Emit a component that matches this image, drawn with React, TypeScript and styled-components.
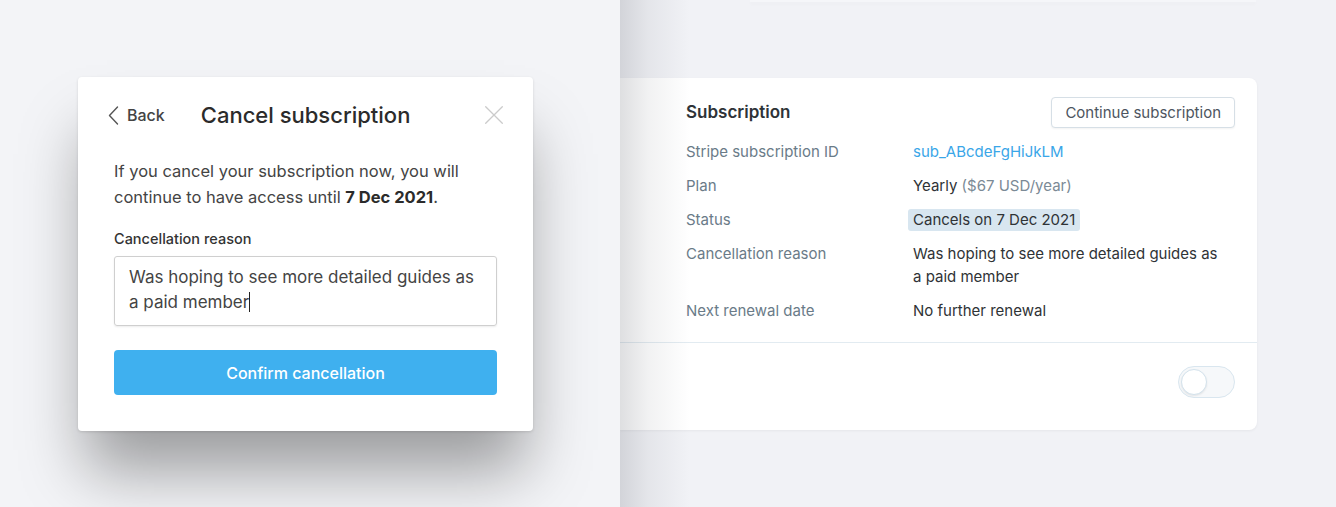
import React from 'react';
import styled, { createGlobalStyle } from 'styled-components';

const GlobalStyle = createGlobalStyle`
  html, body {
    margin: 0;
    padding: 0;
    width: 1336px;
    height: 507px;
    overflow: hidden;
    font-family: Inter, "Liberation Sans", Arial, sans-serif;
    -webkit-font-smoothing: antialiased;
  }
`;

const Page = styled.div`
  display: grid;
  grid-template-columns: 620px 716px;
  height: 507px;
`;

const LeftPane = styled.div`
  background: #f3f4f7;
  padding: 77px 0 0 78px;
  overflow: hidden;
`;

const Modal = styled.div`
  width: 455px;
  box-sizing: border-box;
  background: #fff;
  border-radius: 4px;
  padding: 24px 36px 36px 36px;
  box-shadow: 0 48px 60px -8px rgba(0, 0, 0, 0.36), 0 1px 3px rgba(0, 0, 0, 0.12);
`;

const ModalHeader = styled.div`
  display: flex;
  align-items: center;
  height: 28px;
  margin: 0 -6px;
`;

const BackLink = styled.button`
  display: flex;
  align-items: center;
  gap: 8px;
  border: 0;
  background: none;
  padding: 0;
  font: inherit;
  font-size: 16px;
  font-weight: 500;
  color: #444;
  cursor: pointer;
`;

const Title = styled.h2`
  margin: 0 0 0 36px;
  font-size: 22px;
  font-weight: 500;
  color: #2b2b2b;
  flex: 1;
`;

const CloseBtn = styled.button`
  border: 0;
  background: none;
  padding: 0;
  display: flex;
  cursor: pointer;
`;

const Paragraph = styled.p`
  margin: 29px 0 0;
  font-size: 16.5px;
  line-height: 26px;
  color: #444;
  b {
    font-weight: 700;
    color: #2b2b2b;
  }
`;

const FieldLabel = styled.label`
  display: block;
  margin-top: 19px;
  font-size: 14.5px;
  line-height: 20px;
  font-weight: 500;
  color: #333;
`;

const ReasonBox = styled.div`
  margin-top: 7px;
  height: 70px;
  box-sizing: border-box;
  border: 1px solid #cfcfcf;
  border-radius: 3px;
  box-shadow: 0 1px 2px rgba(0, 0, 0, 0.08);
  padding: 8px 14px;
  font-size: 17px;
  line-height: 25px;
  color: #444;
`;

const Caret = styled.span`
  display: inline-block;
  width: 1px;
  height: 20px;
  background: #222;
  vertical-align: -4px;
`;

const PrimaryButton = styled.button`
  margin-top: 24px;
  width: 100%;
  height: 45px;
  border: 0;
  border-radius: 4px;
  background: #3fb0ef;
  color: #fff;
  font: inherit;
  font-size: 16px;
  font-weight: 500;
  cursor: pointer;
`;

const RightPane = styled.div`
  position: relative;
  background: #f1f2f6;
  overflow: hidden;
  &::before {
    content: '';
    position: absolute;
    inset: 0;
    background: linear-gradient(to right, rgba(60, 64, 75, 0.17), rgba(60, 64, 75, 0.07) 28px, rgba(60, 64, 75, 0) 70px);
    pointer-events: none;
    z-index: 2;
  }
`;

const PrevCardEdge = styled.div`
  height: 2px;
  margin: 0 80px 0 130px;
  background: #f5f6f9;
  box-shadow: 0 2px 4px rgba(0, 0, 0, 0.03);
`;

const Card = styled.div`
  margin-top: 76px;
  width: 637px;
  background: #fff;
  border-radius: 0 8px 8px 0;
  box-shadow: 0 1px 3px rgba(0, 0, 0, 0.05);
`;

const CardBody = styled.div`
  padding: 19px 22px 20px 66px;
`;

const CardHeader = styled.div`
  display: flex;
  align-items: center;
  justify-content: space-between;
  height: 30px;
  margin-bottom: 13px;
`;

const CardTitle = styled.h3`
  margin: 0;
  font-size: 17px;
  font-weight: 600;
  color: #2e3338;
`;

const OutlineButton = styled.button`
  height: 31px;
  padding: 0 13px;
  border: 1px solid #d6dfe6;
  border-radius: 4px;
  background: #fff;
  box-shadow: 0 1px 2px rgba(0, 0, 0, 0.05);
  font: inherit;
  font-size: 15px;
  color: #4d5560;
  cursor: pointer;
`;

const Details = styled.dl`
  display: grid;
  grid-template-columns: 227px 1fr;
  row-gap: 11px;
  margin: 0;
  font-size: 15px;
  line-height: 23px;
`;

const Term = styled.dt`
  color: #6a7b88;
`;

const Value = styled.dd<{ $link?: boolean }>`
  margin: 0;
  color: ${p => (p.$link ? '#3aa6e8' : '#2f3336')};
  max-width: 310px;
`;

const Muted = styled.span`
  color: #7b8a96;
`;

const Badge = styled.span`
  display: inline-block;
  margin-left: -5px;
  padding: 0 5px;
  line-height: 22px;
  border-radius: 3px;
  background: #d8e6f0;
  color: #2f3336;
`;

const CardFooter = styled.div`
  border-top: 1px solid #e2ebf1;
  height: 88px;
  box-sizing: border-box;
  display: flex;
  align-items: flex-start;
  justify-content: flex-end;
  padding: 23px 22px 0 0;
`;

const Toggle = styled.div`
  position: relative;
  width: 57px;
  height: 32px;
  box-sizing: border-box;
  border: 1px solid #d9e6ef;
  border-radius: 16px;
  background: #f6f8fa;
`;

const Knob = styled.span`
  position: absolute;
  left: 2px;
  top: 2px;
  width: 26px;
  height: 26px;
  box-sizing: border-box;
  border-radius: 50%;
  background: #fff;
  border: 1px solid #d3e2ec;
  box-shadow: 0 1px 2px rgba(0, 0, 0, 0.08);
`;

function ChevronLeft() {
  return (
    <svg width="11" height="19" viewBox="0 0 11 19" fill="none">
      <polyline points="9.5,1 1.5,9.5 9.5,18" stroke="#555" strokeWidth="1.4" strokeLinecap="round" strokeLinejoin="round" />
    </svg>
  );
}

function CloseIcon() {
  return (
    <svg width="18" height="18" viewBox="0 0 18 18" fill="none">
      <path d="M0.7 0.7L17.3 17.3M17.3 0.7L0.7 17.3" stroke="#cbcbcb" strokeWidth="1.3" strokeLinecap="round" />
    </svg>
  );
}

export default function App() {
  return (
    <>
      <GlobalStyle />
      <Page>
        <LeftPane>
          <Modal>
            <ModalHeader>
              <BackLink>
                <ChevronLeft />
                Back
              </BackLink>
              <Title>Cancel subscription</Title>
              <CloseBtn aria-label="Close">
                <CloseIcon />
              </CloseBtn>
            </ModalHeader>
            <Paragraph>
              If you cancel your subscription now, you will continue to have access until <b>7 Dec 2021</b>.
            </Paragraph>
            <FieldLabel>Cancellation reason</FieldLabel>
            <ReasonBox>
              Was hoping to see more detailed guides as a paid member<Caret />
            </ReasonBox>
            <PrimaryButton>Confirm cancellation</PrimaryButton>
          </Modal>
        </LeftPane>
        <RightPane>
          <PrevCardEdge />
          <Card>
            <CardBody>
              <CardHeader>
                <CardTitle>Subscription</CardTitle>
                <OutlineButton>Continue subscription</OutlineButton>
              </CardHeader>
              <Details>
                <Term>Stripe subscription ID</Term>
                <Value $link>sub_ABcdeFgHiJkLM</Value>
                <Term>Plan</Term>
                <Value>
                  Yearly <Muted>($67 USD/year)</Muted>
                </Value>
                <Term>Status</Term>
                <Value>
                  <Badge>Cancels on 7 Dec 2021</Badge>
                </Value>
                <Term>Cancellation reason</Term>
                <Value>Was hoping to see more detailed guides as a paid member</Value>
                <Term>Next renewal date</Term>
                <Value>No further renewal</Value>
              </Details>
            </CardBody>
            <CardFooter>
              <Toggle>
                <Knob />
              </Toggle>
            </CardFooter>
          </Card>
        </RightPane>
      </Page>
    </>
  );
}
